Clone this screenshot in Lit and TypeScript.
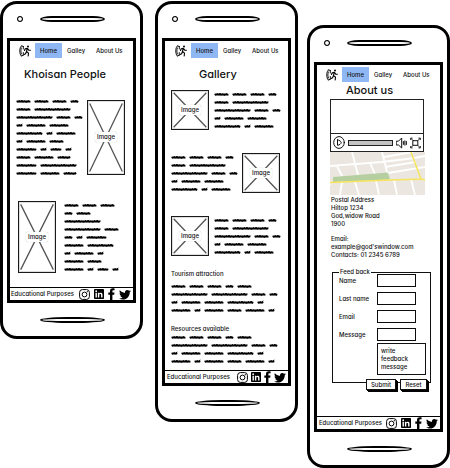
import { LitElement, html, svg, css } from "lit";
import { customElement, property } from "lit/decorators.js";

// Word lengths of the filler copy, one array per line.
const SHORT_COPY = [[15, 15, 15, 9], [15, 37], [37, 15, 9], [7, 20, 20], [27, 7, 20]];
const LONG_COPY = [
  ...SHORT_COPY,
  [7, 20, 15],
  [21, 7, 12, 7],
  [15, 20, 14],
  [21, 37],
  [21, 20, 14],
];
const SIDE_COPY = [
  [15, 15, 15], [9, 15], [37], [37, 15], [9, 7, 21],
  [20, 27], [7, 20, 7], [20, 15], [20, 7, 12, 7],
];
const WIDE_COPY = [
  [15, 15, 15, 9, 15], [37, 37, 15, 9], [7, 20, 20, 27, 7], [20, 7, 20, 15, 20, 7],
];

@customElement("scribble-text")
export class ScribbleText extends LitElement {
  @property({ attribute: false }) lines: number[][] = [];

  static styles = css`
    :host { display: block; flex: none; }
    .line { display: block; height: 8px; overflow: visible; }
    .ink { fill: none; stroke: #000; stroke-linecap: round; stroke-linejoin: round; }
    .thick { stroke-width: 2; }
    .thin { stroke-width: 1; }
  `;

  private word(x: number, w: number) {
    let bumps = `M${x + 1} 4.5`;
    for (let i = 2, n = 0; i < w - 1; i += 1.3, n++) {
      bumps += `L${x + i} ${[5.2, 3.5, 5.1, 3.1, 5.3, 3.9, 5][n % 7]}`;
    }
    return svg`
      <path class="ink thick" d="M${x + 1.5} 4.400H${x + w - 1.5}"></path>
      <path class="ink thin" d=${bumps}></path>`;
  }

  render() {
    return this.lines.map((words) => {
      let x = 0;
      const drawn = words.map((w) => {
        const part = this.word(x, w);
        x += w + 3;
        return part;
      });
      return html`<svg class="line" width=${x} height="8" aria-hidden="true">${drawn}</svg>`;
    });
  }
}

@customElement("image-box")
export class ImageBox extends LitElement {
  static styles = css`
    :host {
      display: grid;
      box-sizing: border-box;
      width: 38px;
      flex: none;
      border: 1px solid #1a1a1a;
      outline: 1px solid #9995;
      outline-offset: -2px;
      place-items: center;
    }
    .cross { grid-area: 1 / 1; width: 100%; height: 100%; min-height: 0; padding: 1px; box-sizing: border-box; }
    .cross path { stroke: #555; stroke-width: 1.3; vector-effect: non-scaling-stroke; fill: none; }
    .label {
      grid-area: 1 / 1;
      background: #fff;
      border-radius: 2px;
      box-shadow: 0 0 1px #aaa;
      padding: 0 2px;
      line-height: 10px;
    }
  `;
  render() {
    return html`
      <svg class="cross" viewBox="0 0 100 100" preserveAspectRatio="none" width="10" height="10">
        <path d="M2 2L98 98M98 2L2 98"></path>
      </svg>
      <span class="label">Image</span>`;
  }
}

@customElement("phone-frame")
export class PhoneFrame extends LitElement {
  static styles = css`
    :host {
      display: block;
      box-sizing: border-box;
      border: 3px solid #000;
      border-radius: 17px 16px 18px 17px;
      padding: 0 4px;
      background: #fff;
    }
    .top { display: flex; align-items: center; box-sizing: border-box; height: 34px; padding: 0 0 4px 10px; gap: 17px; }
    .camera { box-sizing: border-box; width: 6px; height: 6px; border: 1px solid #000; outline: 1px solid #0008; outline-offset: -1px; border-radius: 50%; }
    .slit { box-sizing: border-box; width: 65px; height: 6px; border: 2px solid #000; border-radius: 50% / 60%; }
    .top .slit { border-radius: 12px / 3px; }
    .screen { border: 3px solid #000; }
    .bottom { display: flex; align-items: center; height: 33px; padding-left: 33px; }
    nav { display: flex; align-items: center; margin-top: 2px; height: 15px; padding-left: 9px; }
    :host(.gallery) nav { padding-left: 10px; }
    a { color: inherit; text-decoration: none; white-space: nowrap; }
    .logo { display: block; width: 12px; height: 12px; margin-right: 4px; }
    .home { width: 27px; line-height: 15px; text-align: center; background: #8fb7f4; margin-right: 5px; }
    .galley { margin-right: 11px; }
    footer {
      display: flex;
      align-items: center;
      justify-content: space-between;
      box-sizing: border-box;
      height: 13px;
      border-top: 1px solid #000;
      padding: 0 2px 0 1px;
    }
    :host(.gallery) footer, :host(.about) footer { padding-left: 2px; }
    .social { display: flex; align-items: center; gap: 4px; }
    :host(.gallery) .social { gap: 3px; }
    .social a, .social svg { display: block; }
  `;
  render() {
    return html`
      <div class="top"><span class="camera"></span><span class="slit"></span></div>
      <div class="screen">
        <nav>
          <svg class="logo" viewBox="0 0 12 12" fill="none" stroke="#000" stroke-linecap="round" stroke-linejoin="round">
            <path stroke-width=".9" d="M2.400 .9C.1 2.500 .1 9.200 2.300 11M2.400 .9L4.300 1.500M2.300 11L4.300 10.200M4.300 1.500V4M4.300 7.500V10.200M2.300 3C1.700 5 1.700 7.500 2.400 9"></path>
            <circle cx="9" cy="1.500" r="1" fill="#000" stroke="none"></circle>
            <path stroke-width="1.100" d="M8.300 3.400L7.500 6.500L9.500 8.200L9.200 11M7.400 6.600L6.600 8.800L5.200 9.500M8.200 3.400L6.200 3.700L5.500 5.500M8.600 3.500L9.700 5.100L11.400 5.200"></path>
          </svg>
          <a class="home" href="#home">Home</a>
          <a class="galley" href="#galley">Galley</a>
          <a href="#about">About Us</a>
        </nav>
        <slot></slot>
        <footer>
          <span>Educational Purposes</span>
          <span class="social">
            <a href="#instagram" aria-label="Instagram"><svg width="11" height="11" viewBox="0 0 11 11" fill="none" stroke="#000">
              <rect x=".6" y=".6" width="9.800" height="9.800" rx="2.800"></rect><circle cx="5.500" cy="5.500" r="2.400"></circle><circle cx="8.300" cy="2.700" r=".6" fill="#000" stroke="none"></circle></svg></a>
            <a href="#linkedin" aria-label="LinkedIn"><svg width="10" height="10" viewBox="0 0 10 10">
              <rect width="10" height="10" rx=".8"></rect><circle cx="2.200" cy="2.200" r=".9" fill="#fff"></circle><path fill="#fff" d="M1.500 3.800H2.900V8.500H1.500ZM3.900 3.800H5.200V4.500C6 3.300 8.500 3.300 8.500 5.700V8.500H7.100V6C7.100 4.500 5.300 4.600 5.300 6V8.500H3.900Z"></path></svg></a>
            <a href="#facebook" aria-label="Facebook"><svg width="7" height="12" viewBox="0 0 7 12">
              <path d="M2 12V6.700H.3V4.500H2V3C2 .9 3.200.2 4.700.2C5.500.2 6.300.3 6.600.4V2.200H5.500C4.600 2.200 4.400 2.600 4.400 3.300V4.500H6.500L6.200 6.700H4.400V12Z"></path></svg></a>
            <a href="#twitter" aria-label="Twitter"><svg width="12" height="11" viewBox="0 0 24 21">
              <path d="M23.900 3.600c-.9.400-1.800.7-2.800.8 1-.6 1.800-1.600 2.200-2.700-1 .6-2 1-3.100 1.200C19.300 1.900 18 1.300 16.600 1.300c-3.200 0-5.500 3-4.800 6C7.700 7.100 4.100 5.200 1.700 2.200.4 4.400 1 7.300 3.200 8.700c-.8 0-1.600-.2-2.200-.6-.1 2.300 1.600 4.400 3.900 4.900-.7.200-1.500.2-2.200.1.600 2 2.400 3.400 4.600 3.400C5.200 18.100 2.600 18.800 0 18.500 2.200 19.900 4.800 20.700 7.500 20.700c9.100 0 14.300-7.700 14-14.600 1-.7 1.800-1.600 2.400-2.500z"></path></svg></a>
          </span>
        </footer>
      </div>
      <div class="bottom"><span class="slit"></span></div>`;
  }
}

@customElement("app-root")
export class AppRoot extends LitElement {
  static styles = css`
    :host {
      display: flex;
      align-items: flex-start;
      background: #fff;
      color: #111;
      font: 500 6px/8px Inter, "Liberation Sans", sans-serif;
      font-feature-settings: "cv11";
    }
    phone-frame { flex: 1; min-width: 0; margin-top: 1px; }
    .gallery { margin-left: 12px; }
    .about { margin-left: 9px; margin-top: 25px; }
    h1 { margin: 8px 0 0 14px; font: inherit; font-size: 11px; line-height: 16px; white-space: nowrap; }
    .gallery h1 { margin-left: 34px; }
    .about h1 { margin: 0 0 0 29px; }
    h2 { margin: 14px 0 4px 6px; font: inherit; }
    .row { display: flex; gap: 5px; padding: 0 8px 0 6px; }
    .spread { justify-content: space-between; gap: 0; }
    .first { margin-top: 15px; }
    .tall { height: 75px; align-self: center; }
    .second { margin: 24px 0 14px; padding-left: 8px; gap: 8px; }
    .g1 { margin-top: 8px; }
    .g2 { margin-top: 23px; }
    .copy { margin-left: 6px; }
    .resources { margin: 11px 0 0 6px; }
    .last { margin-bottom: 5px; }

    .player { margin: 1px 16px 0 13px; border: 1px solid #222; }
    .view { height: 33px; border-bottom: 1px solid #222; }
    .controls { display: flex; align-items: center; height: 17px; padding: 0 2px; gap: 3px; }
    .icon { display: block; flex: none; padding: 0; border: 0; background: none; }
    .icon svg { display: block; fill: none; stroke: #111; stroke-linejoin: round; stroke-linecap: round; }
    .seek {
      appearance: none;
      flex: 1;
      min-width: 0;
      box-sizing: border-box;
      height: 6px;
      margin: 0;
      border: 1px solid #222;
      background: #c4c4c4;
    }
    .seek::-webkit-slider-thumb { appearance: none; width: 0; height: 0; }
    .map { display: block; width: calc(100% - 28px); height: 43px; margin: 0 0 0 13px; }
    .contact { margin: 0 0 7px 14px; padding-top: 1px; font-style: normal; white-space: nowrap; }
    .contact + .contact { padding-top: 0; }
    .contact a { color: inherit; text-decoration: none; }
    fieldset { margin: 9px 9px 0 15px; padding: 0 5px 7px 6px; border: 1px solid #111; min-width: 0; }
    legend { padding: 0 1px; }
    .fields { display: grid; grid-template-columns: 38px 1fr; row-gap: 5px; margin-top: -2px; }
    label { line-height: 13px; white-space: nowrap; }
    input, textarea, button { font: inherit; color: inherit; font-feature-settings: inherit; }
    .box { box-sizing: border-box; width: 39px; height: 13px; padding: 0 2px; border: 1px solid #111; outline: 1px solid #0005; outline-offset: -1px; background: #fff; }
    textarea {
      display: block;
      box-sizing: border-box;
      width: 49px;
      height: 32px;
      margin: 2px 0 0 38px;
      padding: 3px;
      border: 1px solid #111;
      background: #fff;
      resize: none;
      overflow: hidden;
    }
    .actions { position: relative; display: flex; justify-content: flex-end; gap: 4px; margin: -4px 13px 26px 0; }
    .actions button { width: 30px; height: 11px; padding: 0; border: 1px solid #111; background: #fff; box-shadow: 1px 1px 0 #000, 2px 2px 0 #000; line-height: 9px; }
    .actions button + button { width: 27px; }
  `;

  render() {
    return html`
      <phone-frame>
        <h1>Khoisan People</h1>
        <div class="row spread first">
          <scribble-text .lines=${LONG_COPY}></scribble-text>
          <image-box class="tall"></image-box>
        </div>
        <div class="row second">
          <image-box></image-box>
          <scribble-text .lines=${SIDE_COPY}></scribble-text>
        </div>
      </phone-frame>

      <phone-frame class="gallery">
        <h1>Gallery</h1>
        <div class="row g1">
          <image-box></image-box>
          <scribble-text .lines=${SHORT_COPY}></scribble-text>
        </div>
        <div class="row spread g2">
          <scribble-text .lines=${SHORT_COPY}></scribble-text>
          <image-box></image-box>
        </div>
        <div class="row g2">
          <image-box></image-box>
          <scribble-text .lines=${SHORT_COPY}></scribble-text>
        </div>
        <h2>Tourism attraction</h2>
        <scribble-text class="copy" .lines=${WIDE_COPY}></scribble-text>
        <h2 class="resources">Resources available</h2>
        <scribble-text class="copy last" .lines=${WIDE_COPY}></scribble-text>
      </phone-frame>

      <phone-frame class="about">
        <h1>About us</h1>
        <div class="player">
          <div class="view"></div>
          <div class="controls">
            <button class="icon" aria-label="Play"><svg width="12" height="13" viewBox="0 0 12 13">
              <ellipse cx="6" cy="6.500" rx="5.300" ry="5.900"></ellipse><path d="M4.500 3.800V9.300C6.500 9 8 8 8.200 6.600C8 5.200 6.500 4.300 4.500 3.800Z"></path></svg></button>
            <input class="seek" type="range" value="0" aria-label="Seek">
            <button class="icon" aria-label="Volume"><svg width="11" height="12" viewBox="0 0 11 12">
              <path d="M.6 4.200H2.500L5.700 1V11L2.500 8H.6ZM7.400 4.500V7.400M8.900 3.800V8.200M10.400 4.500V7.500"></path></svg></button>
            <button class="icon" aria-label="Full screen"><svg width="11" height="12" viewBox="0 0 11 12">
              <rect x="3.200" y="3.700" width="4.600" height="4.600"></rect><path stroke-width=".9" d="M3.200 3.700L1 1.500M7.800 3.700L10 1.500M3.200 8.300L1 10.500M7.800 8.300L10 10.500M.7 2.600V1.100H2.200M8.800 1.100H10.300V2.600M.7 9.400V10.900H2.200M8.800 10.900H10.300V9.400"></path></svg></button>
          </div>
        </div>
        <svg class="map" viewBox="0 0 95 43" preserveAspectRatio="none" role="img" aria-label="Map">
          <rect width="95" height="43" fill="#ebe7e0"></rect>
          <g fill="none" stroke="#fff" stroke-width="1.800">
            <path d="M0 14L52 10L85 6M22 0L28 23M52 0L59 28M7 14L12 24M40 11L45 22M54 5L83 0M55 15L86 10M58 21L88 16M84 6L95 4M88 16L95 15"></path>
            <path d="M0 33L0 29M12 30L10 43M25 30L29 43M46 29L49 43M64 28L67 43M81 27L85 43"></path>
          </g>
          <path d="M3 25L58 20.500L60 27.500L3 30Z" fill="#b5cfa0"></path>
          <path d="M0 30.500L60 28L91 27L95 28M81 0L91 27" fill="none" stroke="#f6e55c" stroke-width="1.500"></path>
        </svg>
        <address class="contact">Postal Address<br>Hiltop 1234<br>God,widow Road<br>1900</address>
        <address class="contact">Email:<br><a href="#mail">example@god'swindow.com</a><br>Contacts: 01 2345 6789</address>
        <form>
          <fieldset>
            <legend>Feed back</legend>
            <div class="fields">
              <label for="name">Name</label><input class="box" id="name">
              <label for="last">Last name</label><input class="box" id="last">
              <label for="email">Email</label><input class="box" id="email">
              <label for="message">Message</label><input class="box" id="message">
            </div>
            <textarea aria-label="Feedback" .value=${"write\nfeedback\nmessage"}></textarea>
          </fieldset>
          <div class="actions">
            <button type="button">Submit</button>
            <button type="reset">Reset</button>
          </div>
        </form>
      </phone-frame>`;
  }
}
